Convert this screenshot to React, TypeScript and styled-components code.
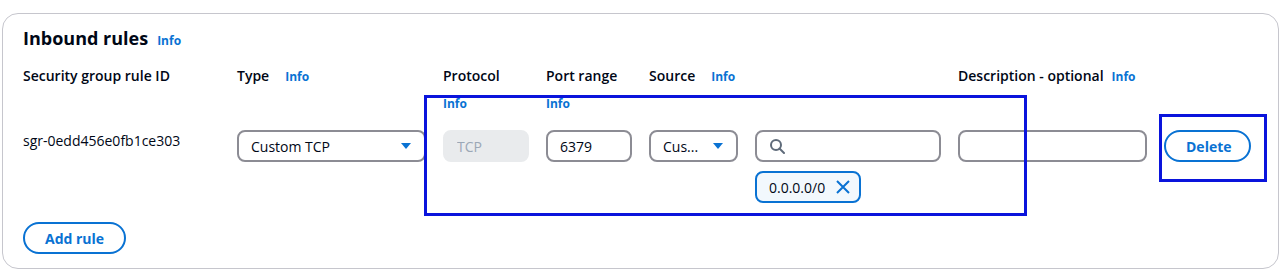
import styled, { createGlobalStyle } from 'styled-components';

const GlobalStyle = createGlobalStyle`
	* {
		box-sizing: border-box;
	}
	body {
		margin: 0;
		background: #ffffff;
		font-family: 'Open Sans', 'Noto Sans', Arial, sans-serif;
		color: #000716;
	}
`;

const Page = styled.div`
	position: relative;
	width: 1281px;
	height: 270px;
	padding: 13px 2px 0 2px;
	overflow: hidden;
`;

const Card = styled.section`
	border: 1px solid #c6c6cd;
	border-radius: 16px;
	padding: 13px 20px 14px 20px;
	background: #ffffff;
`;

const Title = styled.h2`
	margin: 0 0 13px 0;
	font-size: 18px;
	line-height: 22px;
	font-weight: 700;
	display: flex;
	align-items: baseline;
	gap: 9px;
`;

const InfoLink = styled.a`
	font-size: 12px;
	font-weight: 700;
	color: #0972d3;
	text-decoration: none;
	line-height: 22px;
`;

const Grid = styled.div`
	display: grid;
	grid-template-columns: 197px 189px 86px 86px 89px 186px 189px 87px;
	column-gap: 17px;
	align-items: start;
`;

const HeaderCell = styled.div<{ $span?: number; $gap?: number }>`
	grid-column: span ${(p) => p.$span ?? 1};
	display: flex;
	flex-wrap: wrap;
	align-items: baseline;
	column-gap: ${(p) => p.$gap ?? 16}px;
	row-gap: 6px;
	font-size: 14px;
	line-height: 22px;
	font-weight: 600;
	margin-bottom: 15px;
`;

const RuleId = styled.div`
	font-size: 14px;
	line-height: 22px;
`;

const FieldBox = styled.div<{ $disabled?: boolean }>`
	height: 32px;
	border: 2px solid ${(p) => (p.$disabled ? '#e9ebed' : '#8c8c94')};
	background: ${(p) => (p.$disabled ? '#e9ebed' : '#ffffff')};
	color: ${(p) => (p.$disabled ? '#9ba7b6' : '#000716')};
	border-radius: 8px;
	display: flex;
	align-items: center;
	padding: 0 12px;
	gap: 8px;
	font-size: 14px;
	white-space: nowrap;
`;

const FieldText = styled.span`
	flex: 1;
	overflow: hidden;
`;

const Stack = styled.div`
	display: flex;
	flex-direction: column;
	align-items: flex-start;
	gap: 9px;
`;

const Token = styled.div`
	height: 32px;
	border: 2px solid #0972d3;
	background: #f2f8fd;
	border-radius: 8px;
	display: flex;
	align-items: center;
	gap: 10px;
	padding: 0 8px 0 12px;
	font-size: 14px;
`;

const PillButton = styled.button`
	height: 32px;
	border: 2px solid #0972d3;
	border-radius: 20px;
	background: #ffffff;
	color: #0972d3;
	font-family: inherit;
	font-size: 14px;
	font-weight: 700;
	padding: 0 20px;
	cursor: pointer;
`;

const Footer = styled.div`
	margin-top: 19px;
`;

const Highlight = styled.div<{ $l: number; $t: number; $w: number; $h: number }>`
	position: absolute;
	left: ${(p) => p.$l}px;
	top: ${(p) => p.$t}px;
	width: ${(p) => p.$w}px;
	height: ${(p) => p.$h}px;
	border: 3px solid #0a14dc;
	pointer-events: none;
`;

const Caret = () => (
	<svg width="12" height="8" viewBox="0 0 12 8">
		<path d="M1 1h10L6 7z" fill="#0972d3" />
	</svg>
);

const SearchIcon = () => (
	<svg width="16" height="16" viewBox="0 0 16 16" fill="none" stroke="#5f6b7a" strokeWidth="2">
		<circle cx="7" cy="7" r="5" />
		<path d="M10.5 10.5L15 15" strokeLinecap="round" />
	</svg>
);

const CloseIcon = () => (
	<svg width="16" height="16" viewBox="0 0 16 16" fill="none" stroke="#0972d3" strokeWidth="2">
		<path d="M2 2l12 12M14 2L2 14" />
	</svg>
);

export default function App() {
	return (
		<>
			<GlobalStyle />
			<Page>
				<Card>
					<Title>
						Inbound rules <InfoLink>Info</InfoLink>
					</Title>
					<Grid>
						<HeaderCell>Security group rule ID</HeaderCell>
						<HeaderCell>
							Type <InfoLink>Info</InfoLink>
						</HeaderCell>
						<HeaderCell>
							Protocol <InfoLink>Info</InfoLink>
						</HeaderCell>
						<HeaderCell>
							Port range <InfoLink>Info</InfoLink>
						</HeaderCell>
						<HeaderCell $span={2}>
							Source <InfoLink>Info</InfoLink>
						</HeaderCell>
						<HeaderCell $gap={8}>
							Description - optional <InfoLink>Info</InfoLink>
						</HeaderCell>
						<HeaderCell />

						<RuleId>sgr-0edd456e0fb1ce303</RuleId>
						<FieldBox>
							<FieldText>Custom TCP</FieldText>
							<Caret />
						</FieldBox>
						<FieldBox $disabled>
							<FieldText>TCP</FieldText>
						</FieldBox>
						<FieldBox>
							<FieldText>6379</FieldText>
						</FieldBox>
						<FieldBox>
							<FieldText>Cus...</FieldText>
							<Caret />
						</FieldBox>
						<Stack>
							<FieldBox style={{ width: '100%' }}>
								<SearchIcon />
							</FieldBox>
							<Token>
								0.0.0.0/0
								<CloseIcon />
							</Token>
						</Stack>
						<FieldBox />
						<PillButton>Delete</PillButton>
					</Grid>
					<Footer>
						<PillButton>Add rule</PillButton>
					</Footer>
				</Card>
				<Highlight $l={424} $t={95} $w={603} $h={121} />
				<Highlight $l={1159} $t={114} $w={108} $h={68} />
			</Page>
		</>
	);
}
